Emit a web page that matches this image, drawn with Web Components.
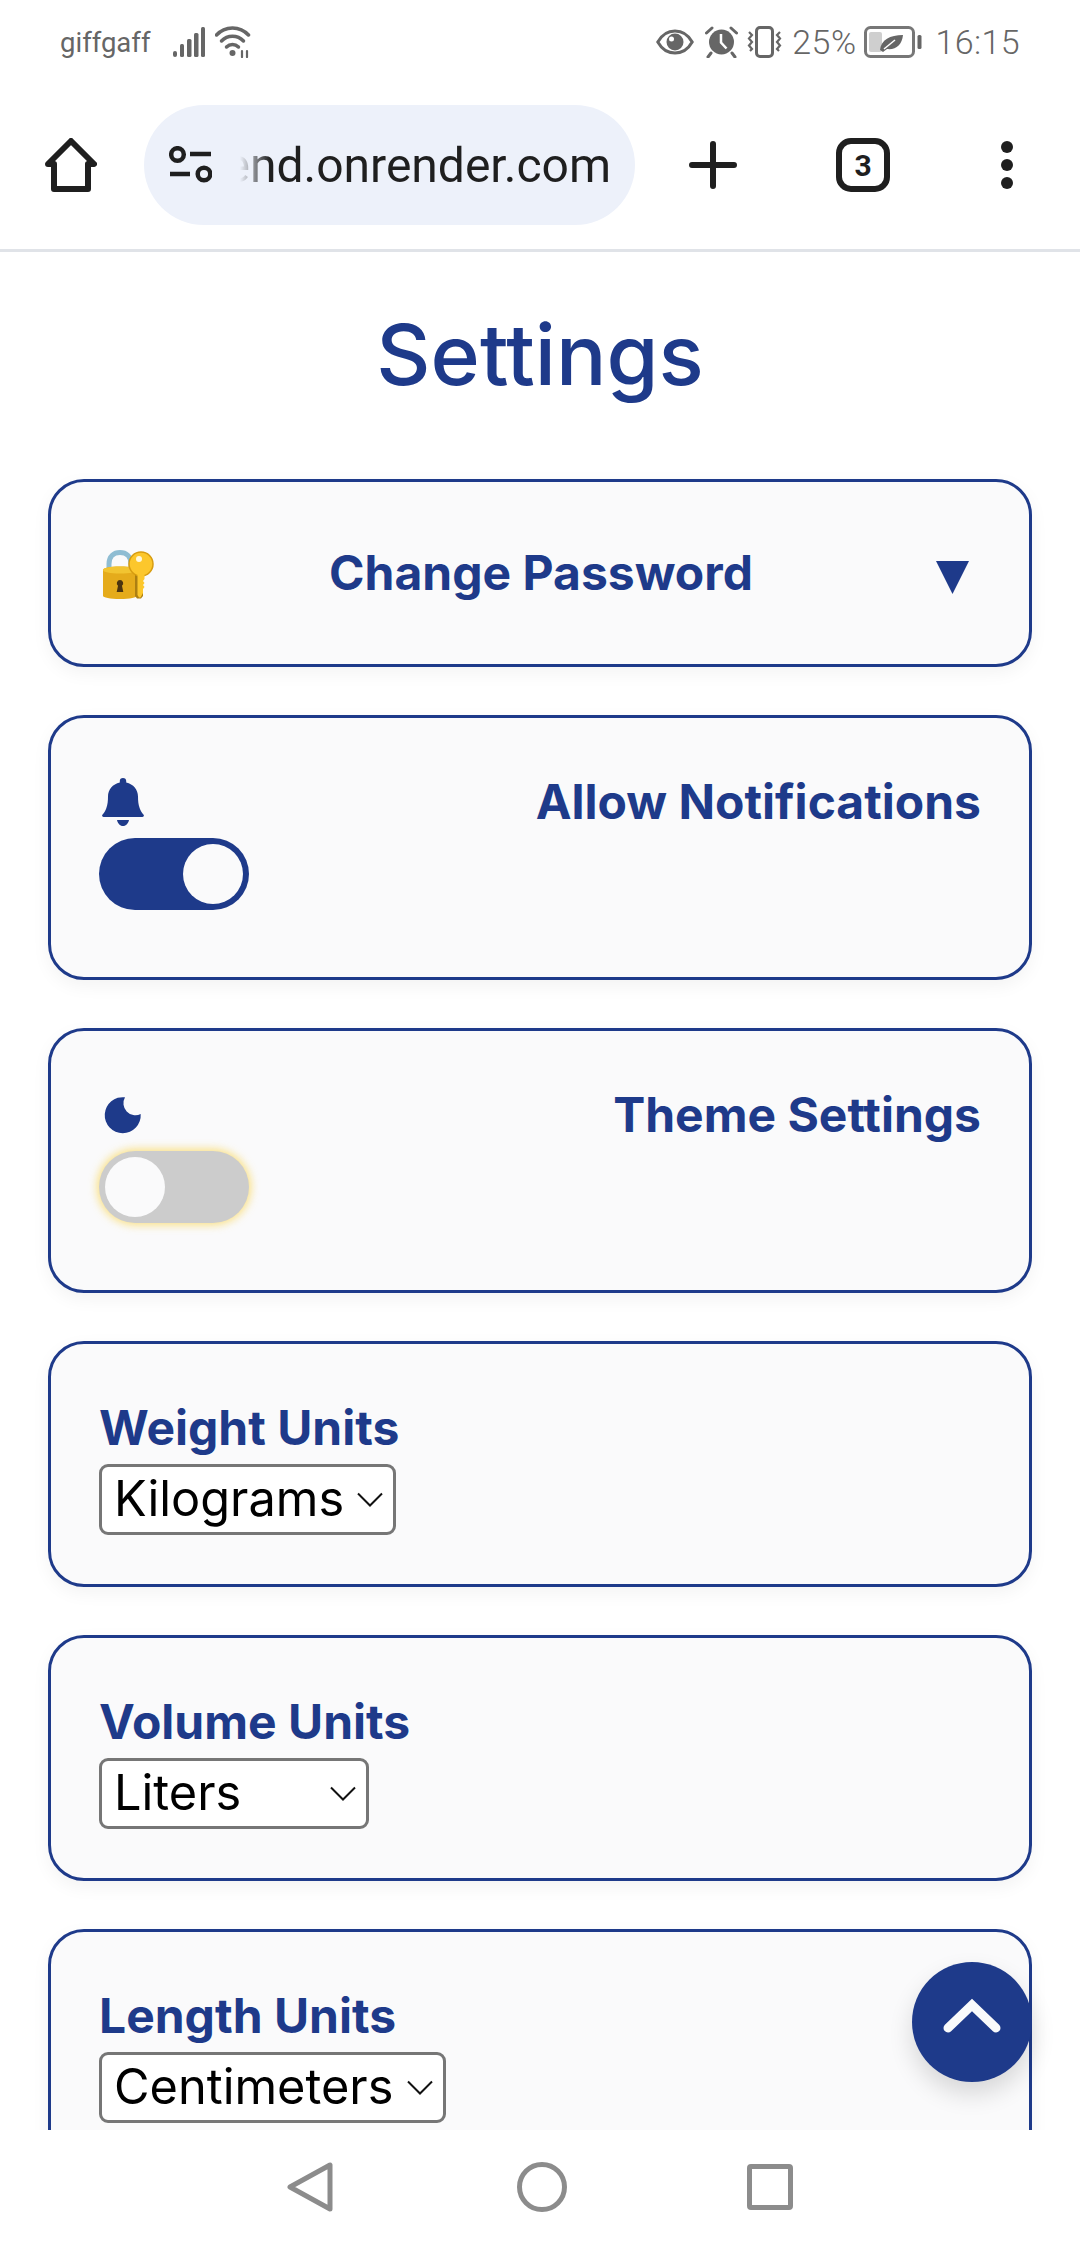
<!DOCTYPE html>
<html lang="en">
<head>
<meta charset="utf-8">
<title>Settings</title>
<style>
  html, body { margin: 0; height: 100%; background: #fff; }
  body { width: 1080px; height: 2244px; overflow: hidden; font-family: Inter, "Liberation Sans", sans-serif; }
</style>
</head>
<body>
<phone-screen>
  <status-bar slot="top"></status-bar>
  <browser-toolbar slot="top" url="end.onrender.com" tabs="3"></browser-toolbar>

  <h1-title>Settings</h1-title>

  <setting-card variant="dropdown">
    <lock-key-icon slot="icon"></lock-key-icon>
    Change Password
  </setting-card>

  <setting-card variant="toggle">
    <svg slot="icon" width="42" height="48" viewBox="0 0 42 48"><path fill="#1e3a8a" d="M21 0c-2 0-3.2 1.300-3.200 3v1.600C10.600 6.200 6 11.800 6 18.600c0 4.200-.4 8.400-1.700 11.600C3.500 32.500 2 35 .6 36.400c-1 1.100-.4 2.600 1 2.600h38.800c1.400 0 2-1.500 1-2.600-1.400-1.400-2.900-3.900-3.700-6.200C36.400 27 36 22.800 36 18.600c0-6.800-4.600-12.400-11.800-14V3c0-1.700-1.200-3-3.200-3zM15 42c.6 3.300 3 6 6 6s5.400-2.700 6-6z"/></svg>
    Allow Notifications
    <toggle-switch slot="control" on></toggle-switch>
  </setting-card>

  <setting-card variant="toggle">
    <svg slot="icon" width="42" height="48" viewBox="-3 -6 42 48"><path fill="#1e3a8a" d="M20 .3A18 18 0 1 0 35.700 17A12 12 0 0 1 20 .3z"/></svg>
    Theme Settings
    <toggle-switch slot="control" focused></toggle-switch>
  </setting-card>

  <setting-card variant="select">
    Weight Units
    <unit-select slot="control" width="297">Kilograms</unit-select>
  </setting-card>

  <setting-card variant="select">
    Volume Units
    <unit-select slot="control" width="270">Liters</unit-select>
  </setting-card>

  <setting-card variant="select">
    Length Units
    <unit-select slot="control" width="347">Centimeters</unit-select>
  </setting-card>

  <scroll-top-button slot="overlay"></scroll-top-button>
  <nav-bar slot="bottom"></nav-bar>
</phone-screen>

<script>
class PhoneScreen extends HTMLElement {
  constructor() {
    super();
    this.attachShadow({ mode: 'open' });
    this.shadowRoot.innerHTML = `
      <style>
        :host { display: flex; flex-direction: column; width: 1080px; height: 2244px; position: relative; overflow: hidden; background: #fff; }
        .content { flex: 1; min-height: 0; overflow: hidden; display: flex; flex-direction: column; gap: 48px; padding: 0 48px; }
      </style>
      <slot name="top"></slot>
      <div class="content"><slot></slot></div>
      <slot name="overlay"></slot>
      <slot name="bottom"></slot>
    `;
  }
}

class StatusBar extends HTMLElement {
  constructor() {
    super();
    this.attachShadow({ mode: 'open' });
    this.shadowRoot.innerHTML = `
      <style>
        :host { display: flex; align-items: center; height: 84px; box-sizing: border-box; padding: 0 60px 0 60px; color: #666; font-family: Roboto, sans-serif; }
        svg { display: block; flex: none; }
        .carrier { font-size: 27.500px; margin-right: 23px; }
        .wifi { margin-left: 10px; }
        .right { margin-left: auto; display: flex; align-items: center; }
        .num { font-size: 34px; font-weight: 300; letter-spacing: .4px; }
      </style>
      <span class="carrier">giffgaff</span>
      <svg width="32" height="30" viewBox="0 0 32 30" fill="#666"><rect x="0" y="24" width="4" height="6" rx="2"/><rect x="7" y="17" width="4" height="13" rx="1.500"/><rect x="14" y="12" width="4.500" height="18" rx="1.500"/><rect x="21" y="6" width="4.500" height="24" rx="1.500"/><rect x="28" y="0" width="4" height="30" rx="1.500"/></svg>
      <svg class="wifi" width="38" height="32" viewBox="0 0 38 32" fill="none" stroke="#666" stroke-width="3.500" stroke-linecap="round"><path d="M1.500 9C10-.5 25-.5 33.500 9"/><path d="M6.500 15C12.500 8.500 22.500 8.500 28.500 15"/><path d="M11.500 21c3.500-3.500 8.500-3.500 12 0"/><circle cx="17.500" cy="27" r="3" fill="#666" stroke="none"/><path d="M27 31v-6M32 25v6" stroke-width="2.200"/></svg>
      <div class="right">
        <svg width="38" height="26" viewBox="0 0 38 26"><path fill="none" stroke="#666" stroke-width="3" d="M1.800 13C6 5.500 12 2 19 2s13 3.500 17.200 11C32 20.500 26 24 19 24S6 20.500 1.800 13z"/><circle cx="19" cy="13" r="8.500" fill="#666"/><circle cx="15.500" cy="10" r="2.500" fill="#fff"/></svg>
        <svg style="margin-left:11px" width="33" height="32" viewBox="0 0 33 32"><circle cx="16.500" cy="16" r="12.500" fill="#666"/><path d="M16 8v8.500l5.500 6" fill="none" stroke="#fff" stroke-width="2.500"/><path d="M1.500 7L7 2M31.500 7L26 2M6 27l-3 4M27 27l3 4" stroke="#666" stroke-width="3" stroke-linecap="round"/></svg>
        <svg style="margin-left:8px" width="37" height="32" viewBox="0 0 37 32" fill="none" stroke="#666"><rect x="10.500" y="1.500" width="16" height="29" rx="3.500" stroke-width="3"/><path d="M3 6l3 3-3 3.500 3 3.500-3 3.500 3 3.500-2 2M34 6l-3 3 3 3.500-3 3.500 3 3.500-3 3.500 2 2" stroke-width="2.200"/></svg>
        <span class="num" style="margin-left:9px">25%</span>
        <svg style="margin-left:8px" width="58" height="32" viewBox="0 0 58 32"><rect x="1.500" y="1.500" width="48" height="29" rx="5" fill="none" stroke="#777" stroke-width="3"/><rect x="5" y="6" width="13" height="20" rx="2" fill="#cfcfcf"/><path fill="#666" d="M16 24c1-10 10-15 23-15-1 10-7 15-16 14l-4 3z"/><path d="M20 23l11-9" stroke="#fff" stroke-width="1.500"/><rect x="53.500" y="9" width="4" height="14" rx="1.500" fill="#666"/></svg>
        <span class="num" style="margin-left:13px">16:15</span>
      </div>
    `;
  }
}

class BrowserToolbar extends HTMLElement {
  constructor() {
    super();
    this.attachShadow({ mode: 'open' });
    this.shadowRoot.innerHTML = `
      <style>
        :host { display: flex; align-items: center; height: 168px; box-sizing: border-box; padding-bottom: 3px; border-bottom: 3px solid #e0e3e8; padding-left: 45px; color: #1f1f1f; font-family: Roboto, sans-serif; }
        svg { display: block; flex: none; }
        .pill { width: 491px; height: 120px; margin-left: 47px; border-radius: 60px; background: #edf1fa; display: flex; align-items: center; box-sizing: border-box; padding: 0 24px 0 25px; }
        .url { margin-left: auto; font-size: 48px; white-space: nowrap; -webkit-mask-image: linear-gradient(to right, transparent 16px, #000 46px); mask-image: linear-gradient(to right, transparent 16px, #000 46px); }
        .plus { margin-left: 54px; }
        .tabs { margin-left: 99px; width: 54px; height: 54px; box-sizing: border-box; border: 6px solid #1f1f1f; border-radius: 15px; display: flex; align-items: center; justify-content: center; font: 700 30px Roboto, sans-serif; }
        .more { margin-left: 111px; }
      </style>
      <svg width="52" height="54" viewBox="0 0 52 54" fill="none" stroke="#1f1f1f" stroke-width="6" stroke-linejoin="round" stroke-linecap="round"><path d="M3 26L26 3l23 23h-6v25H9V26z"/></svg>
      <div class="pill">
        <svg width="43" height="38" viewBox="0 0 43 38" fill="none" stroke="#1f1f1f" stroke-width="4.500"><circle cx="8.500" cy="8.500" r="6.300"/><path d="M21 8h21M1 28h20"/><circle cx="35" cy="28" r="6.300"/></svg>
        <div class="url" id="url"></div>
      </div>
      <svg class="plus" width="48" height="48" viewBox="0 0 48 48" stroke="#1f1f1f" stroke-width="6" stroke-linecap="round"><path d="M3 24h42M24 3v42"/></svg>
      <div class="tabs" id="tabs"></div>
      <svg class="more" width="12" height="48" viewBox="0 0 12 48" fill="#1f1f1f"><circle cx="6" cy="6" r="6"/><circle cx="6" cy="24" r="6"/><circle cx="6" cy="42" r="6"/></svg>
    `;
  }

  connectedCallback() {
    this.shadowRoot.querySelector('#url').textContent = this.getAttribute('url');
    this.shadowRoot.querySelector('#tabs').textContent = this.getAttribute('tabs');
  }
}

class H1Title extends HTMLElement {
  constructor() {
    super();
    this.attachShadow({ mode: 'open' });
    this.shadowRoot.innerHTML = `
      <style>
        :host { display: block; flex: none; text-align: center; color: #1e3a8a; font-size: 84px; font-weight: 500; line-height: 96px; padding: 55px 0 28px; }
      </style>
      <slot></slot>
    `;
  }
}

class SettingCard extends HTMLElement {
  constructor() {
    super();
    this.attachShadow({ mode: 'open' });
    this.shadowRoot.innerHTML = `
      <style>
        :host { display: block; flex: none; box-sizing: border-box; border: 3px solid #1e3a8a; border-radius: 36px; background: #fafafb; box-shadow: 0 6px 18px rgba(0,0,0,.05); padding: 48px; color: #1e3a8a; font-size: 48px; font-weight: 700; line-height: 72px; }
        .row { display: flex; align-items: center; }
        .label { flex: 1; }
        .arrow { display: none; }
        :host([variant="dropdown"]) .row { min-height: 86px; }
        :host([variant="dropdown"]) .label { text-align: center; margin-right: 8px; }
        :host([variant="dropdown"]) .arrow { display: block; margin: 8px 12px 0 0; }
        :host([variant="dropdown"]) .icon { margin-top: 4px; }
        :host([variant="toggle"]) { padding-bottom: 67px; }
        :host([variant="toggle"]) .label { text-align: right; }
        :host([variant="select"]) { padding-bottom: 49px; }
        :host([variant="select"]) .icon { display: none; }
        ::slotted([slot="icon"]) { display: block; }
        .icon { margin-left: 3px; }
      </style>
      <div class="row">
        <div class="icon"><slot name="icon"></slot></div>
        <div class="label"><slot></slot></div>
        <svg class="arrow" width="33" height="33" viewBox="0 0 33 33"><path fill="#1e3a8a" d="M0 0h33L16.500 33z"/></svg>
      </div>
      <slot name="control"></slot>
    `;
  }
}

class LockKeyIcon extends HTMLElement {
  constructor() {
    super();
    this.attachShadow({ mode: 'open' });
    this.shadowRoot.innerHTML = `
      <style>:host { display: block; } svg { display: block; }</style>
      <svg width="52" height="50" viewBox="0 0 52 50">
        <path d="M7 22V14C7 6 12 2.500 18 2.500S29 6 29 14v8" fill="none" stroke="#8fbdd3" stroke-width="5"/>
        <path d="M1 20c0-2 7-3.500 17-3.500S35 18 35 20v26c0 1.500-7 3-17 3S1 47.500 1 46z" fill="#e5ab1b"/>
        <path d="M1 20c0-2 7-3.500 17-3.500S35 18 35 20c0 2-7 3.500-17 3.500S1 22 1 20z" fill="#f2c431"/>
        <path d="M18 30a3.200 3.200 0 0 1 2 5.700l1.300 6.300h-6.600l1.300-6.300a3.200 3.200 0 0 1 2-5.700z" fill="#4b3410"/>
        <path d="M33 24l3-2h5v24l-2 2.500h-4l-2-2.500z" fill="#ad7f12"/>
        <circle cx="39" cy="14" r="12" fill="#fcc72c" stroke="#d79c10" stroke-width="1.500"/>
        <circle cx="37" cy="9" r="3" fill="#fff8dc"/>
        <path d="M35.500 24h7v5l-1.500 2 1.500 2-1.500 2 1.500 2-1.500 2v4l-2.500 4.500h-1.500l-1.500-2.500z" fill="#fcc72c"/>
      </svg>
    `;
  }
}

class ToggleSwitch extends HTMLElement {
  constructor() {
    super();
    this.attachShadow({ mode: 'open' });
    this.shadowRoot.innerHTML = `
      <style>
        :host { display: flex; width: 150px; height: 72px; box-sizing: border-box; padding: 6px; border-radius: 36px; background: #ccc; }
        :host([on]) { background: #1e3a8a; justify-content: flex-end; }
        :host([focused]) { box-shadow: 0 0 9px 2px rgba(250,215,90,.75); }
        .knob { width: 60px; height: 60px; border-radius: 50%; background: #fafafb; }
      </style>
      <div class="knob"></div>
    `;
  }
}

class UnitSelect extends HTMLElement {
  constructor() {
    super();
    this.attachShadow({ mode: 'open' });
    this.shadowRoot.innerHTML = `
      <style>
        :host { display: flex; align-items: center; height: 71px; box-sizing: border-box; border: 3px solid #767676; border-radius: 9px; background: #fff; color: #000; font-size: 48.700px; font-weight: 400; line-height: 1; padding: 0 10px 0 12px; }
        .value { flex: 1; }
        svg { display: block; flex: none; }
      </style>
      <div class="value"><slot></slot></div>
      <svg width="26" height="15" viewBox="0 0 26 15" fill="none" stroke="#111" stroke-width="2"><path d="M1 1.500l12 12 12-12"/></svg>
    `;
  }

  connectedCallback() {
    this.style.width = this.getAttribute('width') + 'px';
  }
}

class ScrollTopButton extends HTMLElement {
  constructor() {
    super();
    this.attachShadow({ mode: 'open' });
    this.shadowRoot.innerHTML = `
      <style>
        :host { position: absolute; right: 48px; bottom: 162px; width: 120px; height: 120px; border-radius: 50%; background: #1e3a8a; display: flex; align-items: center; justify-content: center; box-shadow: 0 12px 24px rgba(0,0,0,.14); }
      </style>
      <svg width="60" height="36" viewBox="0 0 60 36" fill="none" stroke="#f9fafb" stroke-width="9" stroke-linecap="round" stroke-linejoin="miter" style="margin-top:-13px"><path d="M6 30L30 7l24 23"/></svg>
    `;
  }
}

class NavBar extends HTMLElement {
  constructor() {
    super();
    this.attachShadow({ mode: 'open' });
    this.shadowRoot.innerHTML = `
      <style>
        :host { display: flex; align-items: center; justify-content: center; height: 114px; background: #fff; position: relative; }
        svg { display: block; flex: none; }
      </style>
      <svg width="46" height="50" viewBox="0 0 46 50" fill="none" stroke="#8c8c8c" stroke-width="5" stroke-linejoin="round"><path d="M3 25L43 3v44z"/></svg>
      <svg style="margin-left:184px" width="50" height="50" viewBox="0 0 50 50" fill="none" stroke="#8c8c8c" stroke-width="5"><circle cx="25" cy="25" r="22.500"/></svg>
      <svg style="margin-left:180px" width="46" height="46" viewBox="0 0 46 46" fill="none" stroke="#8c8c8c" stroke-width="5" stroke-linejoin="round"><rect x="2.500" y="2.500" width="41" height="41" rx="1.500"/></svg>
    `;
  }
}

customElements.define('phone-screen', PhoneScreen);
customElements.define('status-bar', StatusBar);
customElements.define('browser-toolbar', BrowserToolbar);
customElements.define('h1-title', H1Title);
customElements.define('setting-card', SettingCard);
customElements.define('lock-key-icon', LockKeyIcon);
customElements.define('toggle-switch', ToggleSwitch);
customElements.define('unit-select', UnitSelect);
customElements.define('scroll-top-button', ScrollTopButton);
customElements.define('nav-bar', NavBar);
</script>
</body>
</html>
